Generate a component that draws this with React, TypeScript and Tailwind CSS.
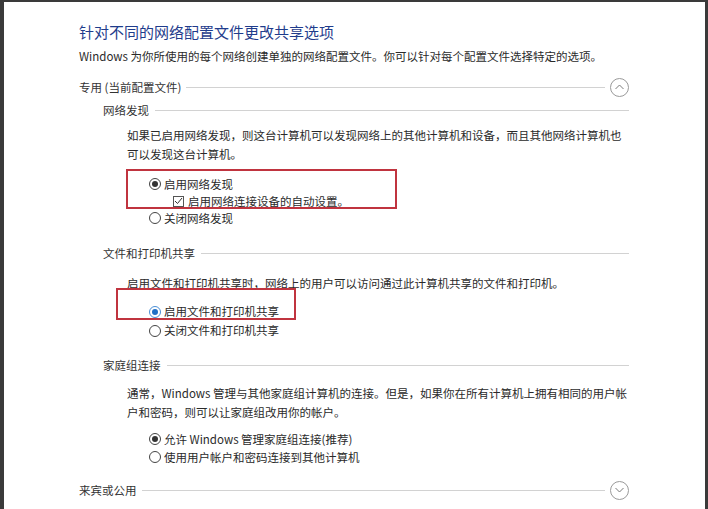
import { ReactNode } from 'react'

function Circle({ up }: { up: boolean }) {
  return (
    <span className="ml-[5px] flex h-[19px] w-[19px] shrink-0 items-center justify-center rounded-full border border-[#9a9a9a]">
      <svg width="9" height="6" viewBox="0 0 9 6" fill="none" stroke="#7a7a7a" strokeWidth="1">
        {up ? <path d="M0.5 5 L4.5 1 L8.5 5" /> : <path d="M0.5 1 L4.5 5 L8.5 1" />}
      </svg>
    </span>
  )
}

function Section({ label, up, className }: { label: string; up: boolean; className?: string }) {
  return (
    <div className={`flex h-[20px] items-center text-[#333] ${className ?? ''}`}>
      <span>{label}</span>
      <span className="ml-[5px] h-px flex-1 bg-[#d2d2d2]" />
      <Circle up={up} />
    </div>
  )
}

function Sub({ label, className }: { label: string; className?: string }) {
  return (
    <div className={`flex h-[20px] items-center pl-[24px] text-[#333] ${className ?? ''}`}>
      <span>{label}</span>
      <span className="ml-[6px] h-px flex-1 bg-[#d2d2d2]" />
    </div>
  )
}

function Radio({ checked, blue, children, className }: { checked?: boolean; blue?: boolean; children: ReactNode; className?: string }) {
  return (
    <div className={`flex items-center pl-[70px] ${className ?? ''}`}>
      <span
        className={`flex h-[12px] w-[12px] shrink-0 items-center justify-center rounded-full border ${
          blue ? 'border-[#4a8fd6]' : 'border-[#444]'
        }`}
      >
        {checked && <span className={`h-[6px] w-[6px] rounded-full ${blue ? 'bg-[#1f6fc5]' : 'bg-[#333]'}`} />}
      </span>
      <span className="ml-[3px]">{children}</span>
    </div>
  )
}

export default function App() {
  return (
    <div className="flex h-[509px] w-[708px] bg-[#3a3a3a] pl-[4px] pr-[3px] pt-[2px] font-['Noto_Sans_CJK_SC',sans-serif] text-[11.5px] leading-[19px] text-[#2a2a2a]">
      <div className="relative flex flex-1 flex-col bg-white pl-[75px] pr-[76px] pt-[19px]">
        <div className="h-[22px] text-[15px] leading-[22px] text-[#1f3c8c]">针对不同的网络配置文件更改共享选项</div>
        <div className="mt-[3px] h-[20px] leading-[20px]">Windows 为你所使用的每个网络创建单独的网络配置文件。你可以针对每个配置文件选择特定的选项。</div>

        <Section label="专用 (当前配置文件)" up className="mt-[11px]" />

        <Sub label="网络发现" className="mt-[3px]" />
        <p className="mt-[6px] pl-[48px]">
          如果已启用网络发现，则这台计算机可以发现网络上的其他计算机和设备，而且其他网络计算机也可以发现这台计算机。
        </p>
        <Radio checked className="mt-[11px] h-[18px]">启用网络发现</Radio>
        <div className="flex h-[16px] items-center pl-[94px]">
          <span className="flex h-[11px] w-[11px] shrink-0 items-center justify-center border border-[#555]">
            <svg width="9" height="8" viewBox="0 0 9 8" fill="none" stroke="#333" strokeWidth="1">
              <path d="M1 4 L3.5 6.5 L8 1" />
            </svg>
          </span>
          <span className="ml-[4px]">启用网络连接设备的自动设置。</span>
        </div>
        <Radio className="h-[18px]">关闭网络发现</Radio>

        <Sub label="文件和打印机共享" className="mt-[16px]" />
        <p className="mt-[11px] pl-[48px]">启用文件和打印机共享时，网络上的用户可以访问通过此计算机共享的文件和打印机。</p>
        <Radio checked blue className="mt-[9px] h-[19px]">启用文件和打印机共享</Radio>
        <Radio className="h-[19px]">关闭文件和打印机共享</Radio>

        <Sub label="家庭组连接" className="mt-[15px]" />
        <p className="mt-[9px] pl-[48px]">
          通常，Windows 管理与其他家庭组计算机的连接。但是，如果你在所有计算机上拥有相同的用户帐户和密码，则可以让家庭组改用你的帐户。
        </p>
        <Radio checked className="mt-[8px] h-[18px]">允许 Windows 管理家庭组连接(推荐)</Radio>
        <Radio className="h-[18px]">使用用户帐户和密码连接到其他计算机</Radio>

        <Section label="来宾或公用" up={false} className="mt-[14px]" />

        {/* red annotation boxes */}
        <div className="absolute left-[122px] top-[167px] h-[40px] w-[271px] border-2 border-[#c0343f]" />
        <div className="absolute left-[112px] top-[286px] h-[32px] w-[180px] border-2 border-[#c0343f]" />
      </div>
    </div>
  )
}
